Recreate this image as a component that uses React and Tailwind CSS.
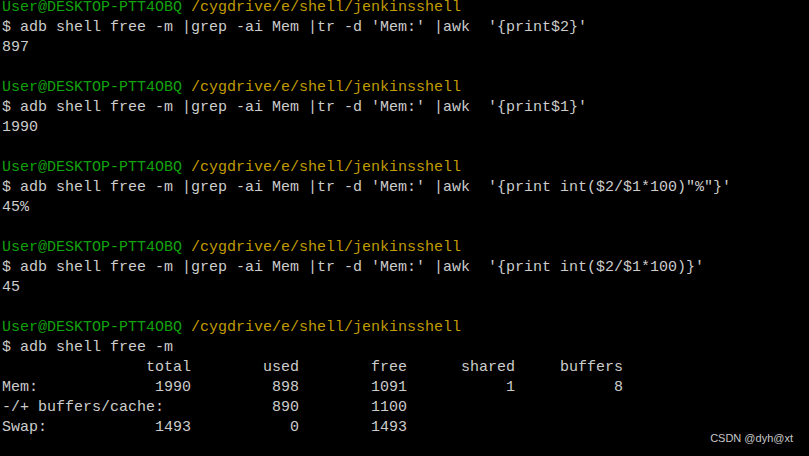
const blocks = [
  {
    cmd: "$ adb shell free -m |grep -ai Mem |tr -d 'Mem:' |awk  '{print$2}'",
    out: ['897'],
  },
  {
    cmd: "$ adb shell free -m |grep -ai Mem |tr -d 'Mem:' |awk  '{print$1}'",
    out: ['1990'],
  },
  {
    cmd: "$ adb shell free -m |grep -ai Mem |tr -d 'Mem:' |awk  '{print int($2/$1*100)\"%\"}'",
    out: ['45%'],
  },
  {
    cmd: "$ adb shell free -m |grep -ai Mem |tr -d 'Mem:' |awk  '{print int($2/$1*100)}'",
    out: ['45'],
  },
  {
    cmd: '$ adb shell free -m',
    out: [
      '                total        used        free      shared     buffers',
      'Mem:             1990         898        1091           1           8',
      '-/+ buffers/cache:            890        1100',
      'Swap:            1493           0        1493',
    ],
    last: true,
  },
];

function Prompt() {
  return (
    <div>
      <span className="text-[#13a10e]">User@DESKTOP-PTT4OBQ</span>{' '}
      <span className="text-[#c19c00]">/cygdrive/e/shell/jenkinsshell</span>
    </div>
  );
}

export default function App() {
  return (
    <div className="relative h-[456px] w-[809px] overflow-hidden bg-black">
      <div
        className="-mt-[2px] pl-[2px] text-[15px] leading-[20px] whitespace-pre text-[#cccccc]"
        style={{ fontFamily: '"Liberation Mono", "DejaVu Sans Mono", monospace' }}
      >
        {blocks.map((b, i) => (
          <div key={i}>
            <Prompt />
            <div>{b.cmd}</div>
            {b.out.map((line, j) => (
              <div key={j}>{line}</div>
            ))}
            {!b.last ? <div>&nbsp;</div> : null}
          </div>
        ))}
      </div>
      <div
        className="absolute right-[16px] bottom-[10px] text-[11px] text-[#c8c8c8]"
        style={{ fontFamily: '"Liberation Sans", Arial, sans-serif' }}
      >
        CSDN @dyh@xt
      </div>
    </div>
  );
}
